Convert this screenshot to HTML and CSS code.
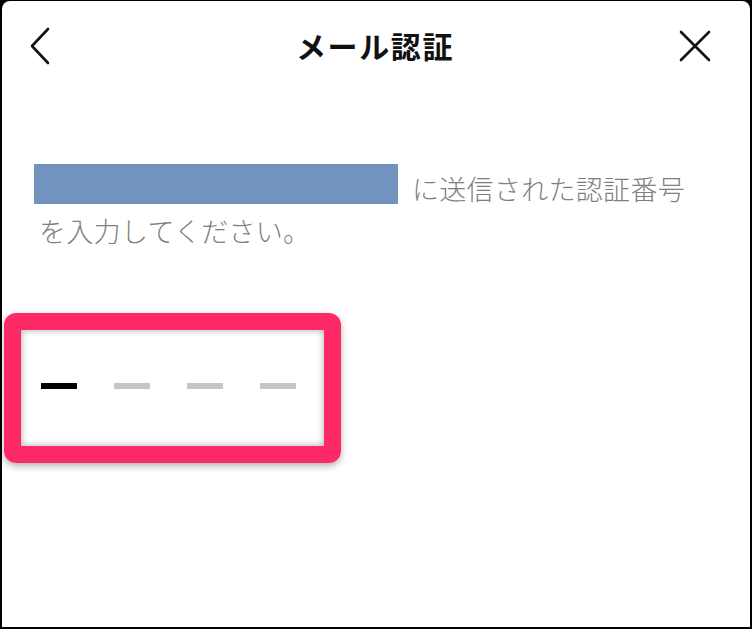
FILE: index.html
```html
<!DOCTYPE html>
<html lang="ja">
<head>
<meta charset="utf-8">
<link rel="stylesheet" href="styles.css">
</head>
<body>
<div class="panel">
  <header class="header">
    <svg class="icon-back" width="24" height="38" viewBox="0 0 24 38"><path d="M20 2 L4 19 L20 36" fill="none" stroke="#111" stroke-width="2.6" stroke-linecap="round" stroke-linejoin="round"/></svg>
    <h1 class="title">メール認証</h1>
    <svg class="icon-close" width="34" height="34" viewBox="0 0 34 34"><path d="M3 3 L31 31 M31 3 L3 31" fill="none" stroke="#111" stroke-width="2.6" stroke-linecap="round"/></svg>
  </header>
  <main class="content">
    <div class="msg-line1">
      <span class="email-mask"></span>
      <span class="msg-text">に送信された認証番号</span>
    </div>
    <div class="msg-line2">を入力してください。</div>
    <div class="code-box">
      <div class="code-field">
        <span class="dash active"></span>
        <span class="dash"></span>
        <span class="dash"></span>
        <span class="dash"></span>
      </div>
    </div>
  </main>
</div>
</body>
</html>
```

FILE: styles.css
```css
html, body {
  margin: 0;
  padding: 0;
  background: #000;
  width: 752px;
  height: 629px;
  overflow: hidden;
}
body {
  font-family: "Noto Sans CJK JP", "Noto Sans", sans-serif;
}
.panel {
  margin: 1px 2px 0 2px;
  height: 626px;
  background: #fff;
  border-radius: 8px 8px 0 0;
  display: flex;
  flex-direction: column;
}
.header {
  height: 88px;
  display: flex;
  align-items: center;
  justify-content: space-between;
  padding: 0 38px 0 26px;
}
.icon-back {
  display: block;
  margin-top: 1px;
}
.icon-close {
  display: block;
  margin-top: 1px;
}
.title {
  margin: 0 0 0 20px;
  font-size: 30px;
  font-weight: 700;
  color: #111;
  letter-spacing: 1.6px;
}
.content {
  padding: 75px 0 0 32px;
  display: flex;
  flex-direction: column;
}
.msg-line1 {
  display: flex;
  align-items: center;
  height: 40px;
}
.email-mask {
  width: 364px;
  height: 40px;
  background: #7093bf;
}
.msg-text {
  margin-left: 14px;
  font-size: 27px;
  font-weight: 300;
  line-height: 40px;
  color: #7f7f7f;
  letter-spacing: 0.3px;
  padding-top: 10px;
}
.msg-line2 {
  margin: 7px 0 0 5px;
  font-size: 27px;
  font-weight: 300;
  line-height: 40px;
  color: #7f7f7f;
  letter-spacing: 0.3px;
}
.code-box {
  margin: 62px 0 0 -30px;
  width: 303px;
  height: 116px;
  border: 17px solid #fe2a67;
  border-radius: 12px;
  box-shadow: 0 3px 7px rgba(0, 0, 0, 0.3);
}
.code-field {
  height: 100%;
  display: flex;
  align-items: center;
  gap: 37px;
  padding-left: 20px;
  box-shadow: inset 0 0 7px rgba(0, 0, 0, 0.35);
}
.dash {
  width: 36px;
  height: 6px;
  background: #c6c6c6;
  margin-top: -4px;
}
.dash.active {
  background: #000;
}
```
